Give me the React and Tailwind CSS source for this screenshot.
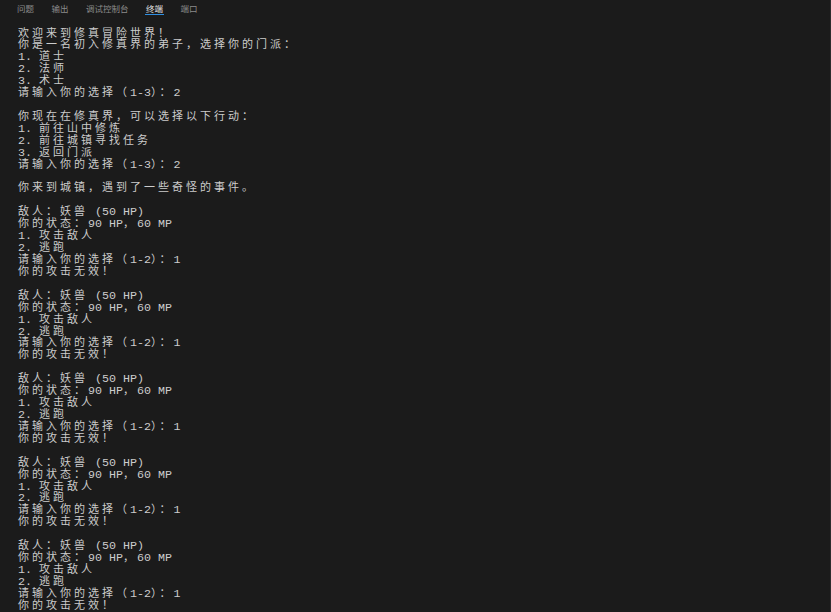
import React from "react"

const tabs = ["问题", "输出", "调试控制台", "终端", "端口"]

const battle = [
  "敌人：妖兽 (50 HP)",
  "你的状态：90 HP，60 MP",
  "1. 攻击敌人",
  "2. 逃跑",
  "请输入你的选择（1-2）：1",
  "你的攻击无效！",
  "",
]

const lines = [
  "欢迎来到修真冒险世界！",
  "你是一名初入修真界的弟子，选择你的门派：",
  "1. 道士",
  "2. 法师",
  "3. 术士",
  "请输入你的选择（1-3）：2",
  "",
  "你现在在修真界，可以选择以下行动：",
  "1. 前往山中修炼",
  "2. 前往城镇寻找任务",
  "3. 返回门派",
  "请输入你的选择（1-3）：2",
  "",
  "你来到城镇，遇到了一些奇怪的事件。",
  "",
  ...battle,
  ...battle,
  ...battle,
  ...battle,
  ...battle,
]

// wide chars take two terminal cells, so give them extra tracking
function TermLine({ text }) {
  const parts = text.split(/([\u3000-\u9fff\uff00-\uffef]+)/)
  return (
    <div className="h-[11.93px] leading-[11.93px] whitespace-pre">
      {parts.map((p, i) =>
        /[\u3000-\u9fff\uff00-\uffef]/.test(p) ? (
          <span key={i} className="text-[11px] tracking-[3px] font-['Noto_Sans_CJK_SC',sans-serif]">
            {p}
          </span>
        ) : (
          <span key={i}>{p}</span>
        )
      )}
      {text === "" && " "}
    </div>
  )
}

export default function App() {
  return (
    <div className="w-[831px] h-[612px] overflow-hidden bg-[#1b1b1b] border-r border-[#2c2c2c] flex flex-col">

      <div className="flex shrink-0 gap-[17.5px] pl-[17px] h-[26.5px] font-['Noto_Sans_CJK_SC',sans-serif] text-[8.5px]">
        {tabs.map((t) => (
          <div key={t} className="flex flex-col">
            <div
              className={
                t === "终端"
                  ? "pt-[2.5px] leading-[10px] text-[#e6e6e6]"
                  : "pt-[2.5px] leading-[10px] text-[#8b8b8b]"
              }
            >
              {t}
            </div>
            {t === "终端" && (
              <div className="mt-[1.5px] h-[1px] -mx-[1px] bg-[#2f8ee0]" />
            )}
          </div>
        ))}
      </div>

      <div className="shrink-0 pl-[18px] text-[#cccccc] text-[11.67px] font-['Liberation_Mono',monospace]">
        {lines.map((l, i) => (
          <TermLine key={i} text={l} />
        ))}
      </div>

    </div>
  )
}
